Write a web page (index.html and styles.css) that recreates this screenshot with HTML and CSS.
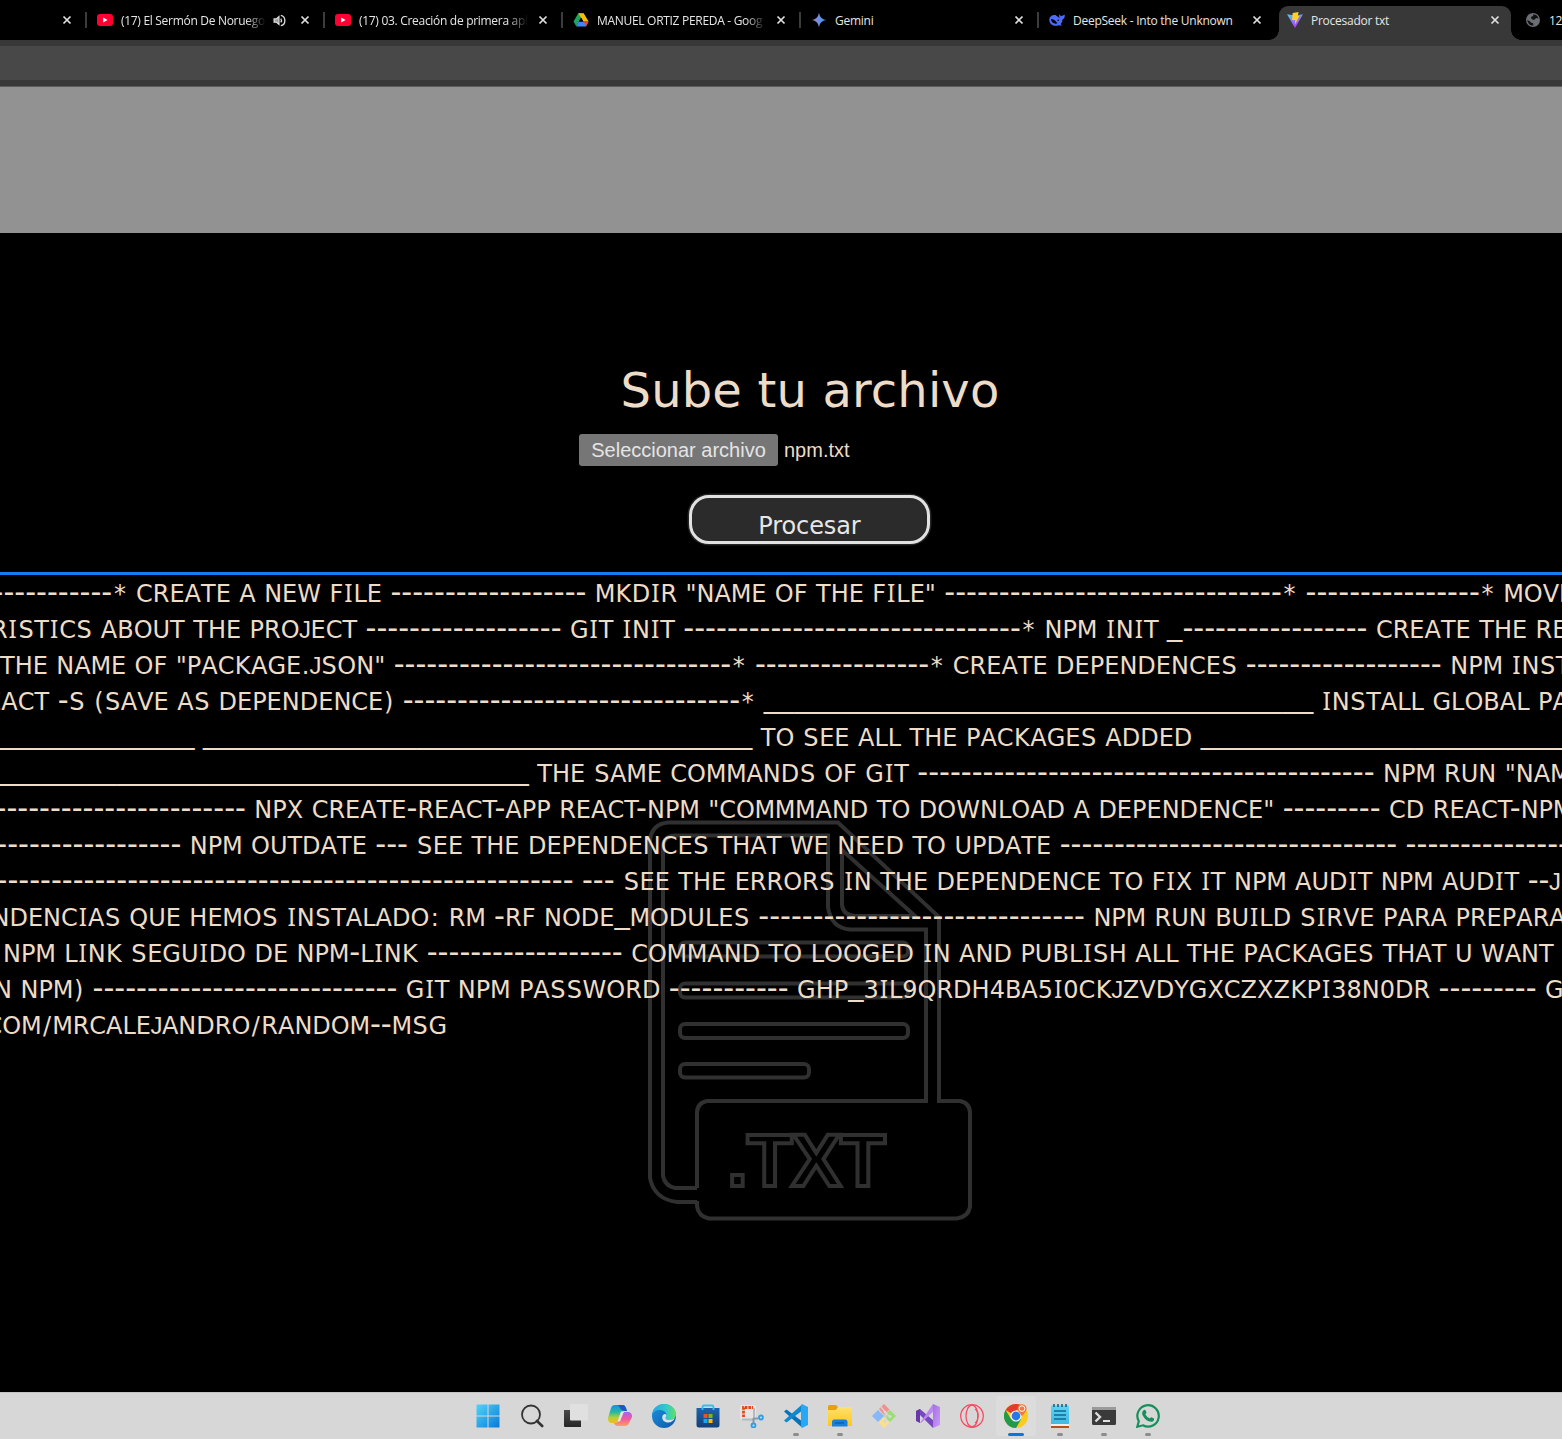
FILE: index.html
```html
<!DOCTYPE html>
<html lang="es">
<head>
<meta charset="utf-8">
<title>Procesador txt</title>
<link rel="stylesheet" href="styles.css">
</head>
<body>
<svg width="0" height="0" class="defs">
  <defs>
    <symbol id="close" viewBox="0 0 10 10"><path d="M1.5 1.5l7 7M8.5 1.5l-7 7" stroke="#e0e0e0" stroke-width="1.7" fill="none"/></symbol>
    <symbol id="youtube" viewBox="0 0 16 16"><rect y="2" width="16" height="12" rx="3" fill="#ff0033"/><path d="M6.2 5.6v4.8L10.6 8z" fill="#fff"/></symbol>
    <linearGradient id="g-gem" x1="0" x2="1"><stop offset="0" stop-color="#c07590"/><stop offset=".35" stop-color="#7d8be0"/><stop offset="1" stop-color="#2d9ff0"/></linearGradient>
    <linearGradient id="g-vite" x1="0" x2=".5" y2="1"><stop offset="0" stop-color="#41d1ff"/><stop offset="1" stop-color="#bd34fe"/></linearGradient>
    <linearGradient id="g-win" x1="0" x2="1" y2="1"><stop offset="0" stop-color="#4fd5fc"/><stop offset="1" stop-color="#0a78d4"/></linearGradient>
    <linearGradient id="g-dark" x2="0" y2="1"><stop offset="0" stop-color="#4a4a4a"/><stop offset="1" stop-color="#262626"/></linearGradient>
    <linearGradient id="g-cop1" x2="0" y2="1"><stop offset="0" stop-color="#1a8ee8"/><stop offset=".4" stop-color="#27b8a0"/><stop offset=".7" stop-color="#b8d030"/><stop offset="1" stop-color="#f7b81c"/></linearGradient>
    <linearGradient id="g-cop2" x2="0" y2="1"><stop offset="0" stop-color="#a763ee"/><stop offset=".5" stop-color="#f05a9a"/><stop offset="1" stop-color="#ffa060"/></linearGradient>
    <linearGradient id="g-edge" x1="0" x2="1"><stop offset="0" stop-color="#22a8e8"/><stop offset=".6" stop-color="#34c8c8"/><stop offset="1" stop-color="#62e060"/></linearGradient>
    <linearGradient id="g-edge2" x2="1" y2="1"><stop offset="0" stop-color="#1c90e0"/><stop offset="1" stop-color="#0f58a8"/></linearGradient>
    <linearGradient id="g-store" x2="0" y2="1"><stop offset="0" stop-color="#1c64ac"/><stop offset="1" stop-color="#143f78"/></linearGradient>
    <linearGradient id="g-fold" x2="0" y2="1"><stop offset="0" stop-color="#ffe070"/><stop offset="1" stop-color="#fcc818"/></linearGradient>
    <linearGradient id="g-vs" x2="1" y2="1"><stop offset="0" stop-color="#a070e0"/><stop offset="1" stop-color="#d098ff"/></linearGradient>
    <linearGradient id="g-note" x2="0" y2="1"><stop offset="0" stop-color="#5cd4f4"/><stop offset="1" stop-color="#40b8e0"/></linearGradient>
  </defs>
</svg>

<nav class="tabs">
  <div class="tab stub"><svg class="close"><use href="#close"/></svg></div>
  <div class="tab"><svg class="fav"><use href="#youtube"/></svg><span class="title fade">(17) El Sermón De Noruego</span>
    <svg class="audio" viewBox="0 0 12 12" fill="none" stroke="#e0e0e0"><path d="M1 4.500v3h2l2.500 2.200V2.300L3 4.500z" fill="#999" stroke-width="1.100"/><path d="M7.200 4.200q1.300 1.800 0 3.600M7.200 1.200c5 1 5 8.600 0 9.600" stroke-width="1.200"/></svg>
    <svg class="close"><use href="#close"/></svg></div>
  <div class="tab"><svg class="fav"><use href="#youtube"/></svg><span class="title fade">(17) 03. Creación de primera apl</span><svg class="close"><use href="#close"/></svg></div>
  <div class="tab"><svg class="fav" viewBox="0 0 16 16"><path d="M5.3 1.2h5.4L8 6 3.2 14.2.5 9.6z" fill="#1ea45c"/><path d="M5.3 1.2h5.4l4.9 8.4h-5.2z" fill="#fbbc05"/><path d="M3.2 14.4l2.4-4.8h10L13 14.4z" fill="#3f86f4"/><path d="M10.6 9.6h5L13 14.2z" fill="#ea4335"/><path d="M8 5.8l2.3 3.8H5.7z" fill="#000"/></svg><span class="title fade">MANUEL ORTIZ PEREDA - Goog</span><svg class="close"><use href="#close"/></svg></div>
  <div class="tab"><svg class="fav" viewBox="0 0 16 16"><path d="M8 .5C8.700 5 11 7.300 15.500 8 11 8.700 8.700 11 8 15.500 7.300 11 5 8.700.5 8 5 7.300 7.300 5 8 .5z" fill="url(#g-gem)"/></svg><span class="title">Gemini</span><svg class="close"><use href="#close"/></svg></div>
  <div class="tab"><svg class="fav" viewBox="0 0 16 16"><path d="M.3 7.500C.5 4 3.500 2.500 6.500 3l2.500 2c.8.3 1.500.7 2 1.300C10 5 9.800 3.500 10.500 2.200l1.300 2L15.800 2.800c.2 2.200-.6 4-2.300 4.700-.2 2.200-.9 3.500-1.800 4.600l1.200 1.600-3-.4C5.200 15 0 12.500.3 7.500z" fill="#4d6bfe"/><path d="M2 7c3-.3 5 2.500 6.500 4.300C5.500 12.500 2.200 10.500 2 7z" fill="#000"/><circle cx="9.200" cy="8.200" r=".8" fill="#000"/></svg><span class="title">DeepSeek - Into the Unknown</span><svg class="close"><use href="#close"/></svg></div>
  <div class="tab active"><svg class="fav" viewBox="0 0 16 16"><path d="M0 2.200L8 16l8-13.800-8 1.400z" fill="url(#g-vite)"/><path d="M5.700 1l5.900-1-.8 4 1.800-.3L7.900 12.500l.3-4.500H5z" fill="#ffd028"/></svg><span class="title">Procesador txt</span><svg class="close"><use href="#close"/></svg></div>
  <div class="tab last"><svg class="fav" viewBox="0 0 16 16"><circle cx="8" cy="8" r="7" fill="#6b6f73"/><path d="M8.500 2.300q4 .3 5 4.200L11.200 6 9 8 6.500 7 6 5l2-1zM2.200 8L5 9.200l1 1.500 2 .3.500 2.500Q3.200 13.800 2.200 8z" fill="#111"/></svg><span class="title">12</span></div>
</nav>
<div class="toolbar"></div>
<header class="banner"></header>

<main>
  <svg class="watermark" viewBox="0 0 360 440" fill="none" stroke="#303030" stroke-width="4">
    <path d="M67 402H47Q24 399 20 378V40Q22 24 38 22.500H208L309 117V301H330Q340 303 340 313V407Q338 417 327 418.500H79Q68 416 67 406V401"/>
    <path d="M67 388H45Q35 386 33 376V46Q34 36 45 35.500H198V107Q201 128 220 129.500H296V301H77Q67 303 67 313V388"/>
    <path d="M212 50V105Q213 115 225 116H285z"/>
    <rect x="50" y="142.500" width="228" height="14" rx="5"/>
    <rect x="50" y="183.500" width="228" height="14" rx="5"/>
    <rect x="50" y="224" width="228" height="14" rx="5"/>
    <rect x="50" y="264" width="129" height="13.500" rx="5"/>
    <text x="97" y="385.500">.TXT</text>
  </svg>
  <section class="upload">
    <h1>Sube tu archivo</h1>
    <div class="file"><span class="pick">Seleccionar archivo</span><span>npm.txt</span></div>
    <button class="process" type="button">Procesar</button>
  </section>
  <section class="output">
    <p>-----------* CREATE A NEW FILE ------------------ MKDIR "NAME OF THE FILE" -------------------------------* ----------------* MOVE</p>
    <p>RISTICS ABOUT THE PROJECT ------------------ GIT INIT -------------------------------* NPM INIT _----------------- CREATE THE REP</p>
    <p>THE NAME OF "PACKAGE.JSON" -------------------------------* ----------------* CREATE DEPENDENCES ------------------ NPM INSTA</p>
    <p>EACT -S (SAVE AS DEPENDENCE) -------------------------------* ____________________________________ INSTALL GLOBAL PAC</p>
    <p>_____________ ____________________________________ TO SEE ALL THE PACKAGES ADDED ____________________________________</p>
    <p>___________________________________ THE SAME COMMANDS OF GIT ------------------------------------------ NPM RUN "NAME</p>
    <p>----------------------- NPX CREATE-REACT-APP REACT-NPM "COMMMAND TO DOWNLOAD A DEPENDENCE" --------- CD REACT-NPM</p>
    <p>----------------- NPM OUTDATE --- SEE THE DEPENDENCES THAT WE NEED TO UPDATE ------------------------------- ------------------</p>
    <p>----------------------------------------------------- --- SEE THE ERRORS IN THE DEPENDENCE TO FIX IT NPM AUDIT NPM AUDIT --JSON</p>
    <p>NDENCIAS QUE HEMOS INSTALADO: RM -RF NODE_MODULES ------------------------------ NPM RUN BUILD SIRVE PARA PREPARAR</p>
    <p>NPM LINK SEGUIDO DE NPM-LINK ------------------ COMMAND TO LOOGED IN AND PUBLISH ALL THE PACKAGES THAT U WANT P</p>
    <p>N NPM) ---------------------------- GIT NPM PASSWORD ----------- GHP_3IL9QRDH4BA5I0CKJZVDYGXCZXZKPI38N0DR --------- GIT</p>
    <p>COM/MRCALEJANDRO/RANDOM--MSG</p>
  </section>
</main>

<footer class="taskbar">
  <div class="app"><svg viewBox="0 0 24 24" fill="url(#g-win)"><path d="M1 .5h10.500v11H.5V1zM12.500.5H23a.5.5 0 0 1 .5.5v10.500h-11zM.5 12.500h11v11H1a.5.5 0 0 1-.5-.5zM12.500 12.500h11V23a.5.5 0 0 1-.5.5H12.500z"/></svg></div>
  <div class="app"><svg viewBox="0 0 24 24" fill="none" stroke="#333"><circle cx="11" cy="10.500" r="9" stroke-width="1.800"/><path d="M17 17l5.200 5" stroke-width="2.600" stroke-linecap="round"/></svg></div>
  <div class="app"><svg viewBox="0 0 24 24"><path d="M0 6h17v17H1a1 1 0 0 1-1-1z" fill="url(#g-dark)"/><rect x="6" y="0" width="18" height="16.500" rx="1" fill="#e0e0e0"/></svg></div>
  <div class="app"><svg viewBox="0 0 24 24"><path d="M7 1h8q2 0 3 3l1 3h-3q-2 0-3 3l-2 6q-1 3-4 3H3Q-.5 18 0 14L3 4Q4 1 7 1z" fill="url(#g-cop1)"/><path d="M9.500 1H15q2 0 3 3l1 3h-3q-3-.5-4-3-1-3-2.500-3z" fill="#1a58c8"/><path d="M17 22H9q-2 0-3-3h2q2 0 3-3l2-5q1-3 4-3h4q3.500 1 3 5l-3 6q-1 3-4 3z" fill="url(#g-cop2)"/><path d="M13 7.500h3l-4 10H9.500z" fill="#e4e4e4"/></svg></div>
  <div class="app"><svg viewBox="0 0 24 24"><circle cx="12" cy="12" r="12" fill="url(#g-edge2)"/><path d="M0 11C1 4 6 0 12 0c7 0 12 5 12 10 0 4-3 6-6.500 6-2.500 0-4-1-4-2 0-.8 1-1.200 1-3C14.500 8 11 6 7.500 6 4 6 1 8 0 11z" fill="url(#g-edge)"/><path d="M13.500 14c0 1 1.500 2 4 2 2 0 4-.7 5.200-1.900-1 3-3.500 4.400-6.500 4.400-4 0-6-2.500-6-5 0-1.800 1-3 2.300-3.500 1.300 0 2 .7 2 1.500s-1 1.500-1 2.500z" fill="#d8e0e8"/></svg></div>
  <div class="app"><svg viewBox="0 0 24 24"><path d="M.5 4h23v17q0 2.500-2.500 2.500H3Q.5 23.500.5 21z" fill="url(#g-store)"/><path d="M6.500 6V3q0-1.500 1.500-1.500h8q1.500 0 1.500 1.500v3" fill="none" stroke="#36bdf0" stroke-width="1.800"/><path d="M7.500 10h4v4h-4z" fill="#f25022"/><path d="M12.500 10h4v4h-4z" fill="#7fba00"/><path d="M7.500 15h4v4h-4z" fill="#19a8f0"/><path d="M12.500 15h4v4h-4z" fill="#ffb900"/></svg></div>
  <div class="app"><svg viewBox="0 0 24 24" fill="none"><rect x="0" y="1" width="16" height="15" rx="2" fill="#e4e4e4"/><path d="M3.500 13V3.500H13" stroke="#e04818" stroke-width="2.800" stroke-dasharray="2.600 1"/><path d="M14 4v11.500H2" stroke="#b4bac0" stroke-width="2"/><path d="M13 14.500h5M13.500 14v5" stroke="#8899a8" stroke-width="2"/><circle cx="21" cy="13.500" r="2" stroke="#2c9fe6" stroke-width="1.800"/><circle cx="13.500" cy="21.500" r="2" stroke="#2c9fe6" stroke-width="1.800"/></svg></div>
  <div class="app run"><svg viewBox="0 0 24 24"><path d="M0 7.500l2.500-2L19 18l-1 5.500z" fill="#0872b8"/><path d="M0 16.500l2.500 2L19 6l-1-5.500z" fill="#1088d0"/><path d="M18 0l6 3v18l-6 3-1-1.500V1.500z" fill="#28a8f4"/></svg></div>
  <div class="app run"><svg viewBox="0 0 24 24"><path d="M0 2.500Q0 1 1.500 1H8l2 2-2 3H0z" fill="#e8a010"/><path d="M0 6h8l2.500-3H23q1 0 1 1v18H0z" fill="url(#g-fold)"/><path d="M4 22.500V18q0-2.500 2.500-2.500H17q2.500 0 2.500 2.500v4.500z" fill="#1880d8"/><path d="M7 19h9" stroke="#0c60b0" stroke-width="1.500"/></svg></div>
  <div class="app"><svg viewBox="0 0 24 24"><path d="M12 0l5.500 5.500L12 11 7 5z" fill="#f09090"/><path d="M6 6l6 6-6 6-6-6z" fill="#88b8f8"/><path d="M18 6l6 6-6 6-6-6z" fill="#98e070"/><path d="M12 13l5.500 5.500L12 24l-5.500-5.500z" fill="#fce088"/><path d="M9 3l5 6v9M14 9l4 4" stroke="#d7d7d7" stroke-width="1.200" fill="none"/><g fill="#d7d7d7"><circle cx="13" cy="8" r="1.600"/><circle cx="13" cy="17" r="1.800"/><circle cx="18" cy="12.500" r="1.600"/></g></svg></div>
  <div class="app"><svg viewBox="0 0 24 24"><path d="M0 7l4-2 14 12-1 7z" fill="#7848c0"/><path d="M0 7l4-2v14l-4-2z" fill="#6838a8"/><path d="M4 19L17 0l1 7L5 19z" fill="url(#g-vs)"/><path d="M17 0l7 3v18l-7 3z" fill="url(#g-vs)"/></svg></div>
  <div class="app"><svg viewBox="0 0 24 24" fill="none" stroke="#f84860" stroke-width="1.200"><circle cx="12" cy="12" r="11.300"/><ellipse cx="12" cy="12" rx="6" ry="10.800"/><path d="M15 5q3 2 3 7t-3 7"/></svg></div>
  <div class="app run current"><svg viewBox="0 0 24 24"><circle cx="12" cy="12" r="12" fill="#fccb20"/><path d="M12 12L1.600 6A12 12 0 0 1 22.400 6H12z" fill="#e33b2e"/><path d="M1.600 6A12 12 0 0 0 12 24l5.200-9H7z" fill="#229a48"/><circle cx="12" cy="12" r="5.600" fill="#fff"/><circle cx="12" cy="12" r="4.400" fill="#2a78e8"/><path d="M18 12q-5-5-4.500-8a4.600 4.600 0 0 1 9 0Q23 7 18 12z" fill="#f07840"/><circle cx="18" cy="4.600" r="2.800" fill="none" stroke="#fff" stroke-width="1"/></svg></div>
  <div class="app run"><svg viewBox="0 0 24 24"><path d="M3 1.500h18v19H3z" fill="url(#g-note)"/><path d="M3 20h18v2H3z" fill="#eee"/><path d="M3 22h18v2H3z" fill="#b85010"/><path d="M6 0v3M10 0v3M14 0v3M18 0v3" stroke="#185878" stroke-width="1.500"/><path d="M6 7h12M6 11h12M6 15h12" stroke="#106890" stroke-width="1.700"/></svg></div>
  <div class="app run"><svg viewBox="0 0 24 24"><rect y="3" width="24" height="18" rx="1.500" fill="#3a3a3a"/><path d="M0 6V4.500Q0 3 1.500 3h21Q24 3 24 4.500V6z" fill="#9a9a9a"/><path d="M3.500 8.500l4.500 4.500-4.500 4.500" stroke="#ddd" stroke-width="2.400" fill="none"/><path d="M11 17h7" stroke="#fff" stroke-width="1.700"/></svg></div>
  <div class="app run"><svg viewBox="0 0 24 24"><path d="M1.300 22.700l1.500-5.500A10.700 10.700 0 1 1 7 21.300z" fill="none" stroke="#15905c" stroke-width="2.200"/><path d="M8 6q1-.6 1.500.2l1 2.300q0 .8-1.200 1.800 1.500 3 4.600 4.300.9-1.400 1.600-1.400l2.500 1.200q.5 3-2.500 3.300-5.500.2-9.200-7Q5.600 7.500 8 6z" fill="#15905c"/></svg></div>
</footer>
<script src="script.js"></script>
</body>
</html>
```
FILE: styles.css
```css
* { box-sizing: border-box; }
html, body { margin: 0; height: 100%; }
body {
  display: flex;
  flex-direction: column;
  height: 1439px;
  overflow: hidden;
  background: #000;
  color: #ecdcc8;
  font-family: "DejaVu Sans", Verdana, sans-serif;
}
.defs { position: absolute; }

/* Browser tabs */
.tabs { display: flex; flex: none; height: 40px; overflow: hidden; font: 12px/16px "Open Sans", "Noto Sans", sans-serif; letter-spacing: -0.25px; color: #e6e6e6; }
.tab { position: relative; flex: none; display: flex; align-items: center; width: 238px; height: 40px; padding: 0 14px 0 11px; }
.tab:not(.stub):not(.active):not(.last)::before { content: ""; position: absolute; left: -1px; top: 12px; width: 2px; height: 16px; background: #3c3c3c; }
.stub { width: 86px; justify-content: flex-end; }
.fav { flex: none; width: 16px; height: 16px; margin-right: 8px; }
.title { flex: 1; overflow: hidden; white-space: nowrap; margin-right: 10px; padding-top: 1px; }
.fade { letter-spacing: -0.3px; -webkit-mask-image: linear-gradient(to left, transparent, #000 20px); mask-image: linear-gradient(to left, transparent, #000 20px); }
.close { flex: none; width: 10px; height: 10px; }
.audio { flex: none; width: 13px; height: 13px; margin: 0 14px 0 -3px; }
.active::before { content: ""; position: absolute; z-index: 0; inset: 6px 3px 0; background: #383838; border-radius: 9px 9px 0 0; }
.active::after { content: ""; position: absolute; left: -7px; right: -7px; bottom: 0; height: 10px; background: radial-gradient(circle at 0 0, transparent 9.5px, #383838 10px) left / 10px 10px no-repeat, radial-gradient(circle at 100% 0, transparent 9.5px, #383838 10px) right / 10px 10px no-repeat; }
.active > * { position: relative; }
.last { width: 60px; padding-right: 0; }
.last .title { margin: 0; }
.toolbar { flex: none; height: 46px; background: #484848; border: solid #383838; border-width: 6px 0; }
.banner { flex: none; height: 147px; background: #929292; border-top: 1px solid #5c5c5c; }

/* Page */
main { position: relative; flex: 1; overflow: hidden; padding-top: 121px; }
.watermark { position: absolute; left: 630px; top: 567px; width: 360px; height: 440px; }
.watermark text { font: bold 75px "Liberation Sans", Arial, sans-serif; letter-spacing: -1.2px; }
.upload { display: flex; flex-direction: column; align-items: center; padding-left: 58px; height: 218px; }
h1 { margin: 0 0 8px; font-size: 48px; line-height: 72px; font-weight: 400; letter-spacing: 0.15px; }
.file { display: flex; align-items: center; gap: 6px; width: 462px; height: 32px; font: 20px "Liberation Sans", Arial, sans-serif; }
.pick { width: 199px; height: 32px; line-height: 32px; text-align: center; border-radius: 3px; background: #767676; color: #e4e4e4; }
.process { width: 241px; height: 49px; margin: 28.5px 1px 0 0; padding: 13px 0 0; border: 3px solid #e2e2e2; border-radius: 20px; background: #2b2b2b; box-shadow: 0 0 0 1.5px #242424; color: #e6e6e6; font: 24px/30px "DejaVu Sans", Verdana, sans-serif; letter-spacing: -0.1px; }
.output { position: relative; padding-top: 1px; border-top: 3px solid #1080ee; font-size: 24px; line-height: 36px; font-kerning: none; font-variant-ligatures: none; }
.output p { margin: 0; white-space: pre; height: 36px; }
.output p:nth-child(1) { margin-left: -7.5px; }
.output p:nth-child(2) { margin-left: -9px; }
.output p:nth-child(3) { margin-left: 0; }
.output p:nth-child(4) { margin-left: -13.8px; }
.output p:nth-child(5) { margin-left: -3.8px; }
.output p:nth-child(6) { margin-left: -5.2px; }
.output p:nth-child(7) { margin-left: -4.5px; }
.output p:nth-child(8) { margin-left: -3.7px; }
.output p:nth-child(9) { margin-left: -3.5px; }
.output p:nth-child(10) { margin-left: -8.5px; }
.output p:nth-child(11) { margin-left: 3px; }
.output p:nth-child(12) { margin-left: -5.9px; }
.output p:nth-child(13) { margin-left: -14.4px; }
.output span { line-height: 0; }
.slab { font-family: "Noto Sans", sans-serif; font-size: 24.5px; }
.hook { font-family: "Liberation Sans", Arial, sans-serif; }
.dash { font-size: 30.18px; }
.rule { font-size: 30.52px; vertical-align: 3.5px; }

/* Taskbar */
.taskbar { flex: none; display: flex; height: 47px; padding: 3px 0 0 468px; gap: 4px; background: #d7d7d7; border-top: 1px solid #c4c4c4; }
.app { position: relative; flex: none; width: 40px; height: 40px; padding: 8px; border-radius: 4px; }
.app svg { display: block; width: 24px; height: 24px; }
.app:not(.current) svg { margin-left: -0.5px; }
.run::after { content: ""; position: absolute; left: 17px; bottom: 0; width: 6px; height: 3px; border-radius: 2px; background: #8c8c8c; }
.current { background: #dcdcdc; }
.current::after { left: 12px; width: 16px; background: #0a78d8; }
```
FILE: script.js
```js
// Widens the glyphs of the output text to Verdana's advances (in em).
const tracking = {
  "-": 0, "_": 0, "*": 0.136, " ": 0.034, "(": 0.064, ")": 0.064,
  ":": 0.117, ".": 0.046, "/": 0.117, "S": 0.049, "K": 0.037, "M": -0.02,
  "I": 0.076, "J": -0.045
};
const face = { I: "slab", J: "hook", "-": "dash", "_": "rule" };

document.querySelectorAll(".output p").forEach((line) => {
  const runs = line.textContent.match(/([-_* ().:\/SKMIJ])\1*|[^-_* ().:\/SKMIJ]+/g);
  line.replaceChildren(...runs.map((run, i) => {
    const extra = tracking[run[0]];
    if (extra === undefined) return document.createTextNode(run);
    const span = document.createElement("span");
    span.textContent = run;
    if (extra) {
      span.style.letterSpacing = extra + "em";
      span.style.marginLeft = extra / 2 + "em";
      span.style.marginRight = -extra / 2 + "em";
    }
    if (face[run[0]]) span.className = face[run[0]];
    // A hyphen tucks under the arm of a preceding T.
    if (run[0] === "-" && i && runs[i - 1].endsWith("T")) span.style.marginLeft = "-0.09em";
    return span;
  }));
});
```
